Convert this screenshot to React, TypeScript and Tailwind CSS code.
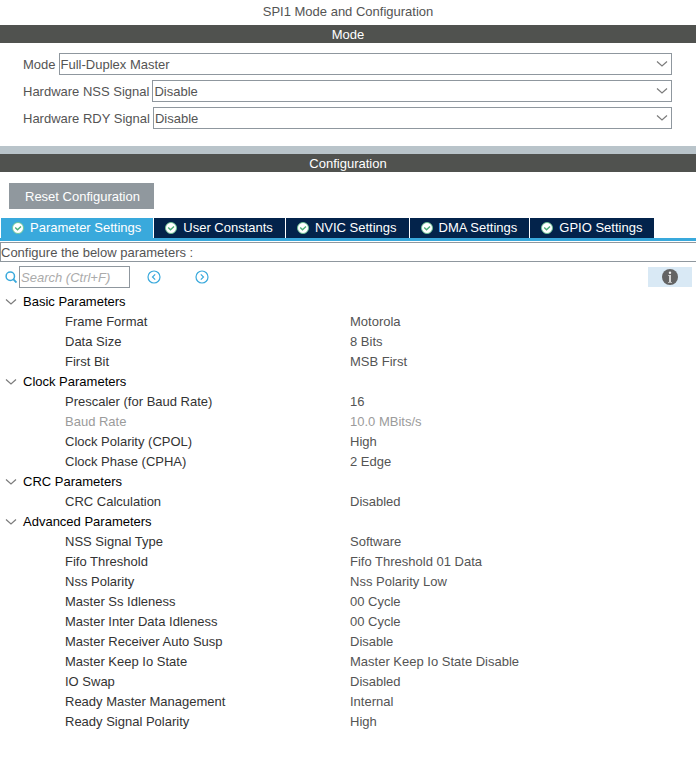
import { Fragment, useState } from "react";
import clsx from "clsx";

const modeFields = [
  { id: "mode", label: "Mode", options: ["Full-Duplex Master", "Full-Duplex Slave", "Disable"] },
  { id: "nss", label: "Hardware NSS Signal", options: ["Disable", "Enable"] },
  { id: "rdy", label: "Hardware RDY Signal", options: ["Disable", "Enable"] },
];

const tabs = [
  "Parameter Settings",
  "User Constants",
  "NVIC Settings",
  "DMA Settings",
  "GPIO Settings",
];

const groups = [
  {
    title: "Basic Parameters",
    rows: [
      { name: "Frame Format", value: "Motorola" },
      { name: "Data Size", value: "8 Bits" },
      { name: "First Bit", value: "MSB First" },
    ],
  },
  {
    title: "Clock Parameters",
    rows: [
      { name: "Prescaler (for Baud Rate)", value: "16" },
      { name: "Baud Rate", value: "10.0 MBits/s", readOnly: true },
      { name: "Clock Polarity (CPOL)", value: "High" },
      { name: "Clock Phase (CPHA)", value: "2 Edge" },
    ],
  },
  {
    title: "CRC Parameters",
    rows: [{ name: "CRC Calculation", value: "Disabled" }],
  },
  {
    title: "Advanced Parameters",
    rows: [
      { name: "NSS Signal Type", value: "Software" },
      { name: "Fifo Threshold", value: "Fifo Threshold 01 Data" },
      { name: "Nss Polarity", value: "Nss Polarity Low" },
      { name: "Master Ss Idleness", value: "00 Cycle" },
      { name: "Master Inter Data Idleness", value: "00 Cycle" },
      { name: "Master Receiver Auto Susp", value: "Disable" },
      { name: "Master Keep Io State", value: "Master Keep Io State Disable" },
      { name: "IO Swap", value: "Disabled" },
      { name: "Ready Master Management", value: "Internal" },
      { name: "Ready Signal Polarity", value: "High" },
    ],
  },
];

function Chevron({ className }: { className?: string }) {
  return (
    <svg
      width="12"
      height="8"
      viewBox="0 0 12 8"
      fill="none"
      stroke="#7c7c7c"
      strokeWidth="1.2"
      className={className}
      aria-hidden="true"
    >
      <path d="M1 1.5L6 6L11 1.5" />
    </svg>
  );
}

function CheckIcon() {
  return (
    <svg width="12" height="12" viewBox="0 0 12 12" fill="none" className="shrink-0" aria-hidden="true">
      <circle cx="6" cy="6" r="5.5" fill="#ffffff" stroke="#6cc592" strokeWidth="0.9" />
      <path d="M3.2 5.6L5.5 7.8L9 4.4" stroke="#4caf78" strokeWidth="1.4" />
    </svg>
  );
}

function CircleArrow({ direction }: { direction: "left" | "right" }) {
  return (
    <svg
      width="14"
      height="14"
      viewBox="0 0 14 14"
      fill="none"
      stroke="#39a9dc"
      strokeWidth="1.2"
      aria-hidden="true"
    >
      <circle cx="7" cy="7" r="6" />
      {direction === "left" ? (
        <path d="M8.2 4.3L5.5 7L8.2 9.7" />
      ) : (
        <path d="M5.8 4.3L8.5 7L5.8 9.7" />
      )}
    </svg>
  );
}

function SectionBar({ title }: { title: string }) {
  return (
    <h2 className="h-[18px] bg-[#50524f] text-center leading-5 text-white">{title}</h2>
  );
}

export default function App() {
  const [activeTab, setActiveTab] = useState(tabs[0]);
  const [closed, setClosed] = useState<string[]>([]);
  const [search, setSearch] = useState("");

  const toggleGroup = (title: string) =>
    setClosed((prev) =>
      prev.includes(title) ? prev.filter((t) => t !== title) : [...prev, title]
    );

  return (
    <main className="min-h-screen bg-white font-['Liberation_Sans',Arial,sans-serif] text-[13px] leading-5 text-[#545454]">
      <h1 className="h-[25px] text-center leading-6">SPI1 Mode and Configuration</h1>

      <section>
        <SectionBar title="Mode" />
        <div className="flex flex-col gap-[5px] pt-2.5 pr-6 pb-[17px] pl-[23px]">
          {modeFields.map((field) => (
            <div key={field.id} className="flex items-center gap-[3px]">
              <label htmlFor={field.id} className="pt-0.5">
                {field.label}
              </label>
              <div className="relative flex-1">
                <select
                  id={field.id}
                  className="block h-[22px] w-full appearance-none border border-[#8f979e] bg-white pt-px pl-px"
                >
                  {field.options.map((option) => (
                    <option key={option}>{option}</option>
                  ))}
                </select>
                <Chevron className="pointer-events-none absolute top-[7px] right-1" />
              </div>
            </div>
          ))}
        </div>
      </section>

      <div className="h-2 bg-[#b9c4ca]" />

      <section>
        <SectionBar title="Configuration" />
        <div className="px-[9px] pt-[11px] pb-[9px]">
          <button className="block h-[26px] bg-[#90989e] pt-0.5 pr-3.5 pl-4 text-white">
            Reset Configuration
          </button>
        </div>

        <div role="tablist" className="flex gap-px border-b-3 border-[#39a9dc] pl-px">
          {tabs.map((tab) => (
            <button
              key={tab}
              role="tab"
              aria-selected={tab === activeTab}
              onClick={() => setActiveTab(tab)}
              className={clsx(
                "flex h-5 items-center gap-1.5 pr-3 pl-[11px] whitespace-nowrap text-white",
                tab === activeTab ? "bg-[#39a9dc]" : "bg-[#03234b]"
              )}
            >
              <CheckIcon />
              {tab}
            </button>
          ))}
        </div>

        <p className="mt-px h-5 border border-r-0 border-[#8f979e] leading-5">
          Configure the below parameters :
        </p>

        <div className="flex items-center pt-1 pr-1 pb-1 pl-[5px]">
          <label htmlFor="search" aria-label="Search" className="w-3.5">
            <svg
              width="12"
              height="12"
              viewBox="0 0 12 12"
              fill="none"
              stroke="#39a9dc"
              strokeWidth="1.5"
              aria-hidden="true"
            >
              <circle cx="5.3" cy="5.2" r="4.2" />
              <path d="M8.2 8.2L11.5 11.5" strokeWidth="1.9" />
            </svg>
          </label>
          <input
            id="search"
            type="text"
            value={search}
            onChange={(e) => setSearch(e.target.value)}
            placeholder="Search (Ctrl+F)"
            className="h-[22px] w-[111px] border border-[#8f979e] pl-px placeholder:text-[#ababab] placeholder:italic"
          />
          <button aria-label="Previous" className="ml-[17px]">
            <CircleArrow direction="left" />
          </button>
          <button aria-label="Next" className="ml-[34px]">
            <CircleArrow direction="right" />
          </button>
          <button
            aria-label="Information"
            className="ml-auto flex h-5 w-11 items-center justify-center bg-[#d9e9f5]"
          >
            <svg width="16" height="16" viewBox="0 0 16 16" aria-hidden="true">
              <circle cx="8" cy="8" r="8" fill="#636363" />
              <circle cx="8" cy="3.8" r="1.2" fill="#f2f2f2" />
              <path d="M6 6H9V13H10V13.8H6V13H7V6.8H6Z" fill="#d4d4d4" />
            </svg>
          </button>
        </div>

        <table className="w-full table-fixed text-left">
          <colgroup>
            <col className="w-[350px]" />
            <col />
          </colgroup>
          <tbody>
            {groups.map((group) => {
              const isClosed = closed.includes(group.title);
              return (
                <Fragment key={group.title}>
                  <tr>
                    <th colSpan={2} className="p-0 font-normal text-black">
                      <button
                        aria-expanded={!isClosed}
                        onClick={() => toggleGroup(group.title)}
                        className="flex h-5 items-center gap-1.5 pl-[5px]"
                      >
                        <Chevron className={clsx(isClosed && "-rotate-90")} />
                        {group.title}
                      </button>
                    </th>
                  </tr>
                  {!isClosed &&
                    group.rows.map((row) => (
                      <tr key={row.name} className={clsx("h-5", row.readOnly && "text-[#9b9b9b]")}>
                        <td className={clsx("p-0 pl-[65px]", !row.readOnly && "text-[#333333]")}>
                          {row.name}
                        </td>
                        <td className="p-0">{row.value}</td>
                      </tr>
                    ))}
                </Fragment>
              );
            })}
          </tbody>
        </table>
      </section>
    </main>
  );
}
